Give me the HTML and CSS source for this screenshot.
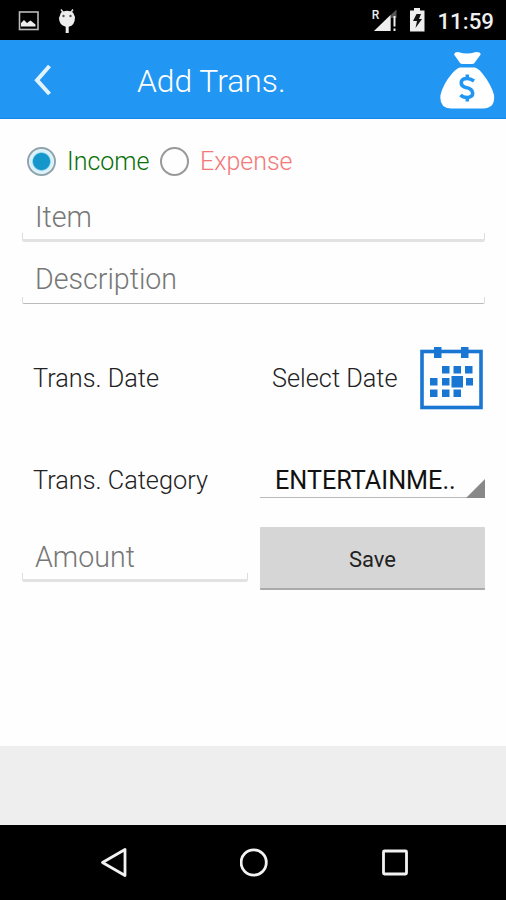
FILE: index.html
```html
<!DOCTYPE html>
<html lang="en">
<head>
<meta charset="utf-8">
<title>Add Trans.</title>
<link rel="stylesheet" href="styles.css">
</head>
<body>
<div class="screen">
  <div class="status">
    <svg class="status-left" width="60" height="26" viewBox="18 7 60 26">
      <rect x="19.5" y="12" width="18.5" height="17.5" fill="none" stroke="#bbb" stroke-width="1.6"/>
      <path d="M21 26.500V23L24 20l3 3 3.500-2.500 5 4v2z" fill="#eee"/>
      <path d="M61 9.500l3 4M73 9.500l-3 4" stroke="#ddd" stroke-width="1.500"/>
      <path d="M61 12.500Q67 9 73 12.500L75 17Q75 25.500 68.700 26.800V33h-3V26.800Q59 25 59 18z" fill="#eee"/>
      <circle cx="63.500" cy="16" r="1.200" fill="#555"/><circle cx="70.500" cy="16" r="1.200" fill="#555"/>
    </svg>
    <div class="status-right">
      <span class="roaming">R</span>
      <svg width="24" height="23" viewBox="374 9 24 23">
        <path d="M375 31L397.500 9.500V18H392V31z" fill="#555"/>
        <path d="M375 31L391.500 15V31z" fill="#eee"/>
        <path d="M395.500 16v10.500M395.500 28.500V31" stroke="#eee" stroke-width="2"/>
      </svg>
      <svg class="battery" width="17" height="24" viewBox="410 8 17 24">
        <path d="M411 10.500h4V8h6v2.500h4.500V31.500H411z" fill="#eee"/>
        <path d="M417.500 14h4.500l-2 5h3l-6.500 9 1.500-7h-4z" fill="#111"/>
      </svg>
      <span class="clock">11:59</span>
    </div>
  </div>
  <header class="header">
    <svg class="back" width="20" height="34" viewBox="33 63 20 34"><path d="M49.500 66L37 80.200 49.500 94" fill="none" stroke="#e1f3ff" stroke-width="4"/></svg>
    <h1 class="title">Add Trans.</h1>
    <svg class="bag" width="56" height="60" viewBox="439 50 56 60">
      <path d="M454 54.500Q455 51.500 459 52.200Q467 55 475 52.200Q480 51.500 480.700 54.500L475.500 61.500Q474.500 64 472 64H462.500Q460 64 459 61.500z" fill="#fff"/>
      <path d="M460 67.500H474.500Q478 68 482 73Q491 84 494 95Q495.500 108 483 108.500H451Q439 108 440.500 95Q443 84 452.500 73Q457 68 460 67.500z" fill="#fff"/>
      <path d="M474 81Q470.500 78.500 467 78.500C459.500 78.500 459.500 86 466 87.500C474.500 89 475 97.500 467 97.500Q463 97.500 460.500 95M467.300 74.500V80M467.300 96.500V101.500" fill="none" stroke="#2196f3" stroke-width="3.600"/>
    </svg>
  </header>
  <main class="form">
    <div class="types">
      <span class="radio checked"></span><span class="income">Income</span>
      <span class="radio"></span><span class="expense">Expense</span>
    </div>
    <div class="field item">Item</div>
    <div class="field description">Description</div>
    <div class="row date-row">
      <span class="label date-label">Trans. Date</span>
      <span class="label select-label">Select Date</span>
      <svg class="calendar" width="64" height="64" viewBox="420 346 64 64" fill="#1976d2">
        <rect x="422" y="351.500" width="59" height="56" fill="none" stroke="#1976d2" stroke-width="3.600"/>
        <path d="M434 347h7.500v11H434zM461 347h7.500v11H461zM442 366h7.500v7.500H442zM453.500 366h7.500v7.500h-7.500zM465 366h7.500v7.500H465zM430 378h7.500v7.500H430zM442 378h7.500v7.500H442zM451.500 376h11.500v11.500h-11.500zM466 378h7v7.500h-7zM430 389.500h7.500v7.500H430zM442 389.500h7.500v7.500H442zM453.500 389.500h7.500v7.500h-7.500z"/>
      </svg>
    </div>
    <div class="row category-row">
      <span class="label category-label">Trans. Category</span>
      <div class="spinner">ENTERTAINME..</div>
    </div>
    <div class="row submit-row">
      <div class="field amount">Amount</div>
      <button class="save">Save</button>
    </div>
  </main>
  <footer class="footer"></footer>
  <nav class="nav">
    <svg width="30" height="32" viewBox="99 847 30 32"><path d="M102.500 862.500L125 849.500V875.500z"/></svg>
    <svg width="30" height="32" viewBox="240 847 30 32"><circle cx="253.700" cy="862.500" r="12.600"/></svg>
    <svg width="30" height="32" viewBox="380 847 30 32"><rect x="383.500" y="851" width="23" height="23" rx="1"/></svg>
  </nav>
</div>
</body>
</html>
```
FILE: styles.css
```css
* { box-sizing: border-box; }
body { margin: 0; background: #fff; font-family: Roboto, sans-serif; font-weight: 300; }
svg { display: block; flex: none; }
.screen { width: 506px; height: 900px; display: flex; flex-direction: column; overflow: hidden; }
.status { height: 40px; background: #000; color: #eee; display: flex; justify-content: space-between; padding: 7px 12px 0 18px; }
.status-right { display: flex; align-items: flex-start; }
.roaming { font-size: 12px; font-weight: 500; line-height: 12px; margin: 2px -6px 0 0; }
.status-right svg { margin-top: 2px; }
.status-right .battery { margin: 1px 11px 0 12px; }
.clock { font-size: 22.3px; font-weight: 500; line-height: 29px; }
.header { height: 79px; background: #2196f3; border-bottom: 1px solid #1488e8; display: flex; align-items: flex-start; padding: 0 11px 0 33px; }
.back { margin-top: 23px; }
.title { margin: 21px 0 0 84px; font-size: 31.8px; line-height: 40px; font-weight: 300; color: #fff; white-space: nowrap; }
.bag { margin: 10px 0 0 auto; }
.form { height: 627px; padding: 23px 21px 0 22px; background: #fefefe; }
.types { height: 38px; display: flex; align-items: center; padding-left: 5px; font-size: 25px; font-weight: 300; }
.radio { width: 29px; height: 29px; border: 2px solid #999; border-radius: 50%; flex: none; }
.checked { background: radial-gradient(circle, #1597cb 0 8px, #d5f1fb 9.5px 11px, #fff 13px); border-color: #8fa4ad; }
.income { width: 104px; padding-left: 11px; color: #087008; }
.expense { padding-left: 11px; color: #f47878; }
.field { position: relative; color: #777; font-size: 28.6px; line-height: 36px; padding-left: 13px; }
.field::after { content: ""; position: absolute; left: 0; right: 0; bottom: 0; height: 6px; border: 1px solid #ddd; border-top: 0; border-bottom: 3px solid #e2e2e2; border-radius: 0 0 2px 2px; }
.item { height: 62px; padding-top: 19px; }
.description { height: 62px; padding-top: 19px; }
.description::after { border-bottom: 1px solid #bbb; }
.row { display: flex; }
.label { font-size: 25.3px; line-height: 30px; color: #222; white-space: nowrap; }
.date-row { height: 106px; padding: 42px 0 0 11px; }
.date-label { width: 239px; padding-top: 18px; }
.select-label { width: 148px; padding-top: 18px; }
.category-row { height: 88px; padding-left: 11px; }
.category-label { width: 227px; padding-top: 56px; }
.spinner { position: relative; width: 225px; height: 88px; border-bottom: 1px solid #bbb; padding: 56px 0 0 15px; font-size: 25.2px; line-height: 30px; font-weight: 400; color: #111; white-space: nowrap; }
.spinner::after { content: ""; position: absolute; right: 0; bottom: -1px; width: 19px; height: 19px; background: #888; clip-path: polygon(100% 0, 100% 100%, 0 100%); }
.submit-row { padding-top: 29px; gap: 12px; }
.amount { width: 226px; height: 55px; padding-top: 12px; }
.save { width: 225px; height: 63px; border: 0; border-bottom: 2px solid #aaa; border-radius: 1px; background: #d6d6d6; color: #222; font: 400 22px Roboto, sans-serif; padding: 3px 0 0; }
.footer { height: 79px; background: #eee; }
.nav { height: 75px; background: #000; display: flex; justify-content: space-between; padding: 22px 96px 0 99px; }
.nav svg { fill: none; stroke: #f2f2f2; stroke-width: 2.8; stroke-linejoin: round; }
```
